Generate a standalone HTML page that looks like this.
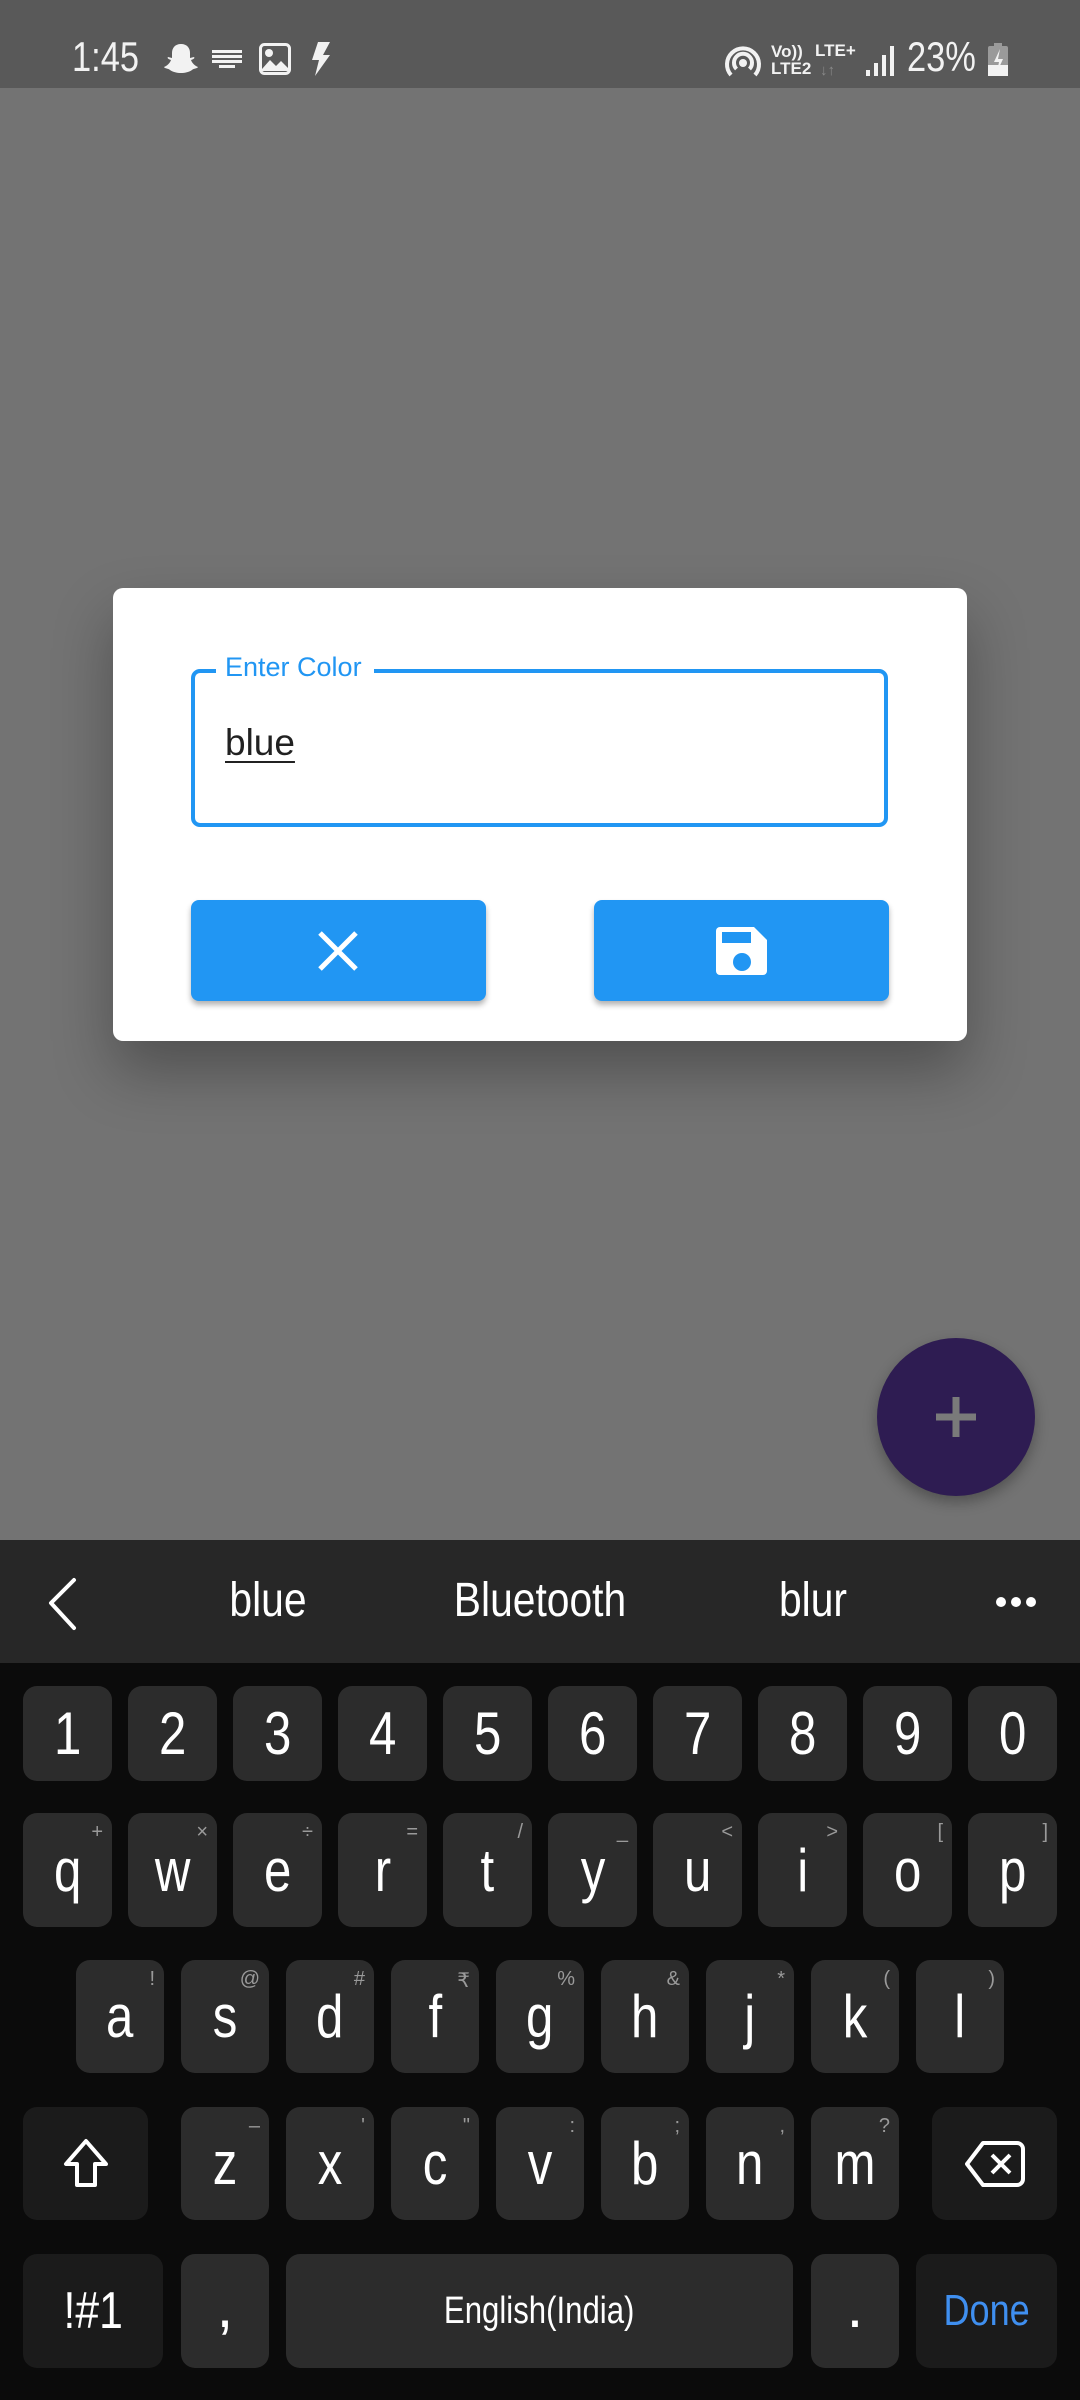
<!DOCTYPE html>
<html><head><meta charset="utf-8"><style>
*{margin:0;padding:0;box-sizing:border-box}
body{width:1080px;height:2400px;position:relative;overflow:hidden;background:#737373;font-family:"Liberation Sans",sans-serif}
.a{position:absolute}
.sb{left:0;top:0;width:1080px;height:88px;background:#595959}
.st{color:#f2f2f2;font-size:42px;top:33px;transform:scaleX(.82);transform-origin:left}
.dlg{left:113px;top:588px;width:854px;height:453px;background:#fff;border-radius:10px;box-shadow:0 30px 60px rgba(0,0,0,0.3)}
.fld{left:78px;top:81px;width:697px;height:158px;border:4px solid #2196F3;border-radius:9px}
.lbl{left:103px;top:64px;background:#fff;padding:0 12px 0 9px;color:#2196F3;font-size:27px;line-height:30px}
.val{left:112px;top:134px;color:#212121;font-size:37px;text-decoration:underline;text-decoration-thickness:2px;text-underline-offset:6px}
.btn{top:312px;width:295px;height:101px;background:#2196F3;border-radius:8px;box-shadow:0 4px 6px rgba(0,0,0,0.3)}
.fab{left:877px;top:1338px;width:158px;height:158px;border-radius:50%;background:#2e1c52;box-shadow:0 6px 14px rgba(0,0,0,0.3)}
.sug{left:0;top:1540px;width:1080px;height:123px;background:#272727}
.sw{color:#fff;font-size:48px;top:1573px;transform:translateX(-50%) scaleX(.85)}
.kb{left:0;top:1663px;width:1080px;height:737px;background:#0b0b0b}
.k{background:#2c2c2c;border-radius:14px;color:#fff;font-size:60px;display:flex;align-items:center;justify-content:center}
.k b{font-weight:normal;display:inline-block;transform:scaleX(.82)}
.k.d{background:#1b1b1b}
.h{position:absolute;right:9px;top:8px;font-size:20px;color:#9a9a9a}
</style></head><body>
<div class="a sb"></div>
<div class="a st" style="left:72px">1:45</div>
<svg class="a" style="left:163px;top:42px" width="36" height="34" viewBox="0 0 36 34"><path d="M18 2c6 0 9 4 9 9v5l4-1c1 1 0 2-3 3 1 3 4 6 7 7-1 2-4 1-6 3-3 2-7 3-11 3s-8-1-11-3c-2-2-5-1-6-3 3-1 6-4 7-7-3-1-4-2-3-3l4 1v-5c0-5 3-9 9-9z" fill="#f2f2f2"/></svg>
<svg class="a" style="left:212px;top:50px" width="30" height="20"><g fill="#f2f2f2"><rect x="0" y="0" width="30" height="3"/><rect x="0" y="5" width="30" height="3"/><rect x="0" y="10" width="30" height="3"/><rect x="7" y="15" width="16" height="3"/></g></svg>
<svg class="a" style="left:259px;top:43px" width="32" height="32" viewBox="0 0 32 32"><rect x="1.5" y="1.5" width="29" height="29" rx="4" fill="none" stroke="#f2f2f2" stroke-width="3"/><circle cx="10" cy="10" r="4" fill="#f2f2f2"/><path d="M3 26l8-9 6 6 5-5 7 7v3H3z" fill="#f2f2f2"/></svg>
<svg class="a" style="left:309px;top:42px" width="22" height="34"><path d="M9 0h12l-7 13h7L6 34l4-16H3z" fill="#f2f2f2"/></svg>
<svg class="a" style="left:724px;top:44px" width="38" height="34" viewBox="0 0 38 34"><g fill="none" stroke="#f2f2f2" stroke-width="4"><path d="M7 31A16 16 0 1 1 31 31"/><path d="M12.5 25A9 9 0 1 1 25.5 25"/></g><circle cx="19" cy="19" r="4" fill="#f2f2f2"/></svg>
<div class="a" style="left:771px;top:43px;color:#f2f2f2;font-size:17px;font-weight:bold;line-height:17px">Vo))<br>LTE2</div>
<div class="a" style="left:815px;top:41px;color:#f2f2f2;font-size:17px;font-weight:bold">LTE+</div>
<div class="a" style="left:820px;top:62px;color:#8a8a8a;font-size:15px;font-weight:bold">↓↑</div>
<svg class="a" style="left:866px;top:46px" width="28" height="30"><g fill="#f2f2f2"><rect x="0" y="24" width="4" height="6"/><rect x="8" y="17" width="4" height="13"/><rect x="16" y="9" width="4" height="21"/><rect x="24" y="0" width="4" height="30"/></g></svg>
<div class="a st" style="left:907px">23%</div>
<svg class="a" style="left:988px;top:43px" width="20" height="33"><rect x="6" y="0" width="8" height="3" fill="#9a9a9a"/><rect x="0" y="3" width="20" height="30" rx="2" fill="#9a9a9a"/><rect x="0" y="22" width="20" height="11" fill="#f2f2f2"/><path d="M12 6l-6 13h5l-2 10 6-13h-5z" fill="#f2f2f2"/></svg>

<div class="a dlg">
 <div class="a fld"></div>
 <div class="a lbl">Enter Color</div>
 <div class="a val">blue</div>
 <div class="a btn" style="left:78px"><svg class="a" style="left:126px;top:30px" width="42" height="42"><path d="M3 3L39 39M39 3L3 39" stroke="#fff" stroke-width="5"/></svg></div>
 <div class="a btn" style="left:481px"><svg class="a" style="left:122px;top:27px" width="52" height="48" viewBox="0 0 52 48"><path d="M4 0h34l13 13v31a4 4 0 0 1-4 4H4a4 4 0 0 1-4-4V4a4 4 0 0 1 4-4z" fill="#fff"/><rect x="6" y="5" width="29" height="11" fill="#2196F3"/><circle cx="26" cy="35" r="9" fill="#2196F3"/></svg></div>
</div>

<div class="a fab"><svg class="a" style="left:59px;top:59px" width="40" height="40"><path d="M20 0v40M0 20h40" stroke="#7a7a7a" stroke-width="7"/></svg></div>

<div class="a sug"></div>
<svg class="a" style="left:44px;top:1575px" width="40" height="60"><path d="M30 5L7 28l23 25" fill="none" stroke="#fff" stroke-width="4" stroke-linecap="round" stroke-linejoin="round"/></svg>
<div class="a sw" style="left:268px">blue</div>
<div class="a sw" style="left:540px">Bluetooth</div>
<div class="a sw" style="left:813px">blur</div>
<svg class="a" style="left:995px;top:1596px" width="42" height="12"><g fill="#fff"><circle cx="6" cy="6" r="5"/><circle cx="21" cy="6" r="5"/><circle cx="36" cy="6" r="5"/></g></svg>

<div class="a kb"></div>
<div class="a k" style="left:23px;top:1686px;width:89px;height:95px"><b>1</b></div>
<div class="a k" style="left:128px;top:1686px;width:89px;height:95px"><b>2</b></div>
<div class="a k" style="left:233px;top:1686px;width:89px;height:95px"><b>3</b></div>
<div class="a k" style="left:338px;top:1686px;width:89px;height:95px"><b>4</b></div>
<div class="a k" style="left:443px;top:1686px;width:89px;height:95px"><b>5</b></div>
<div class="a k" style="left:548px;top:1686px;width:89px;height:95px"><b>6</b></div>
<div class="a k" style="left:653px;top:1686px;width:89px;height:95px"><b>7</b></div>
<div class="a k" style="left:758px;top:1686px;width:89px;height:95px"><b>8</b></div>
<div class="a k" style="left:863px;top:1686px;width:89px;height:95px"><b>9</b></div>
<div class="a k" style="left:968px;top:1686px;width:89px;height:95px"><b>0</b></div>
<div class="a k" style="left:23px;top:1813px;width:89px;height:114px"><b>q</b><span class="h">+</span></div>
<div class="a k" style="left:128px;top:1813px;width:89px;height:114px"><b>w</b><span class="h">×</span></div>
<div class="a k" style="left:233px;top:1813px;width:89px;height:114px"><b>e</b><span class="h">÷</span></div>
<div class="a k" style="left:338px;top:1813px;width:89px;height:114px"><b>r</b><span class="h">=</span></div>
<div class="a k" style="left:443px;top:1813px;width:89px;height:114px"><b>t</b><span class="h">/</span></div>
<div class="a k" style="left:548px;top:1813px;width:89px;height:114px"><b>y</b><span class="h">_</span></div>
<div class="a k" style="left:653px;top:1813px;width:89px;height:114px"><b>u</b><span class="h">&lt;</span></div>
<div class="a k" style="left:758px;top:1813px;width:89px;height:114px"><b>i</b><span class="h">&gt;</span></div>
<div class="a k" style="left:863px;top:1813px;width:89px;height:114px"><b>o</b><span class="h">[</span></div>
<div class="a k" style="left:968px;top:1813px;width:89px;height:114px"><b>p</b><span class="h">]</span></div>
<div class="a k" style="left:76px;top:1960px;width:88px;height:113px"><b>a</b><span class="h">!</span></div>
<div class="a k" style="left:181px;top:1960px;width:88px;height:113px"><b>s</b><span class="h">@</span></div>
<div class="a k" style="left:286px;top:1960px;width:88px;height:113px"><b>d</b><span class="h">#</span></div>
<div class="a k" style="left:391px;top:1960px;width:88px;height:113px"><b>f</b><span class="h">₹</span></div>
<div class="a k" style="left:496px;top:1960px;width:88px;height:113px"><b>g</b><span class="h">%</span></div>
<div class="a k" style="left:601px;top:1960px;width:88px;height:113px"><b>h</b><span class="h">&amp;</span></div>
<div class="a k" style="left:706px;top:1960px;width:88px;height:113px"><b>j</b><span class="h">*</span></div>
<div class="a k" style="left:811px;top:1960px;width:88px;height:113px"><b>k</b><span class="h">(</span></div>
<div class="a k" style="left:916px;top:1960px;width:88px;height:113px"><b>l</b><span class="h">)</span></div>
<div class="a k d" style="left:23px;top:2107px;width:125px;height:113px"><svg width="48" height="52" viewBox="0 0 48 52"><path d="M24 3L4 26h11v21h18V26h11z" fill="none" stroke="#fff" stroke-width="4" stroke-linejoin="round"/></svg></div>
<div class="a k" style="left:181px;top:2107px;width:88px;height:113px"><b>z</b><span class="h">–</span></div>
<div class="a k" style="left:286px;top:2107px;width:88px;height:113px"><b>x</b><span class="h">'</span></div>
<div class="a k" style="left:391px;top:2107px;width:88px;height:113px"><b>c</b><span class="h">"</span></div>
<div class="a k" style="left:496px;top:2107px;width:88px;height:113px"><b>v</b><span class="h">:</span></div>
<div class="a k" style="left:601px;top:2107px;width:88px;height:113px"><b>b</b><span class="h">;</span></div>
<div class="a k" style="left:706px;top:2107px;width:88px;height:113px"><b>n</b><span class="h">,</span></div>
<div class="a k" style="left:811px;top:2107px;width:88px;height:113px"><b>m</b><span class="h">?</span></div>
<div class="a k d" style="left:932px;top:2107px;width:125px;height:113px"><svg width="60" height="46" viewBox="0 0 60 46"><path d="M18 2h34a6 6 0 0 1 6 6v30a6 6 0 0 1-6 6H18L2 23z" fill="none" stroke="#fff" stroke-width="4" stroke-linejoin="round"/><path d="M27 14l18 18M45 14L27 32" stroke="#fff" stroke-width="4"/></svg></div>
<div class="a k d" style="left:23px;top:2254px;width:140px;height:114px;font-size:52px"><b>!#1</b></div>
<div class="a k" style="left:181px;top:2254px;width:88px;height:114px;font-size:60px;padding-bottom:10px">,</div>
<div class="a k" style="left:286px;top:2254px;width:507px;height:114px;font-size:38px"><b>English(India)</b></div>
<div class="a k" style="left:811px;top:2254px;width:88px;height:114px;font-size:60px;padding-bottom:10px">.</div>
<div class="a k d" style="left:916px;top:2254px;width:141px;height:114px;font-size:44px;color:#3f8ff0"><b>Done</b></div>
</body></html>
